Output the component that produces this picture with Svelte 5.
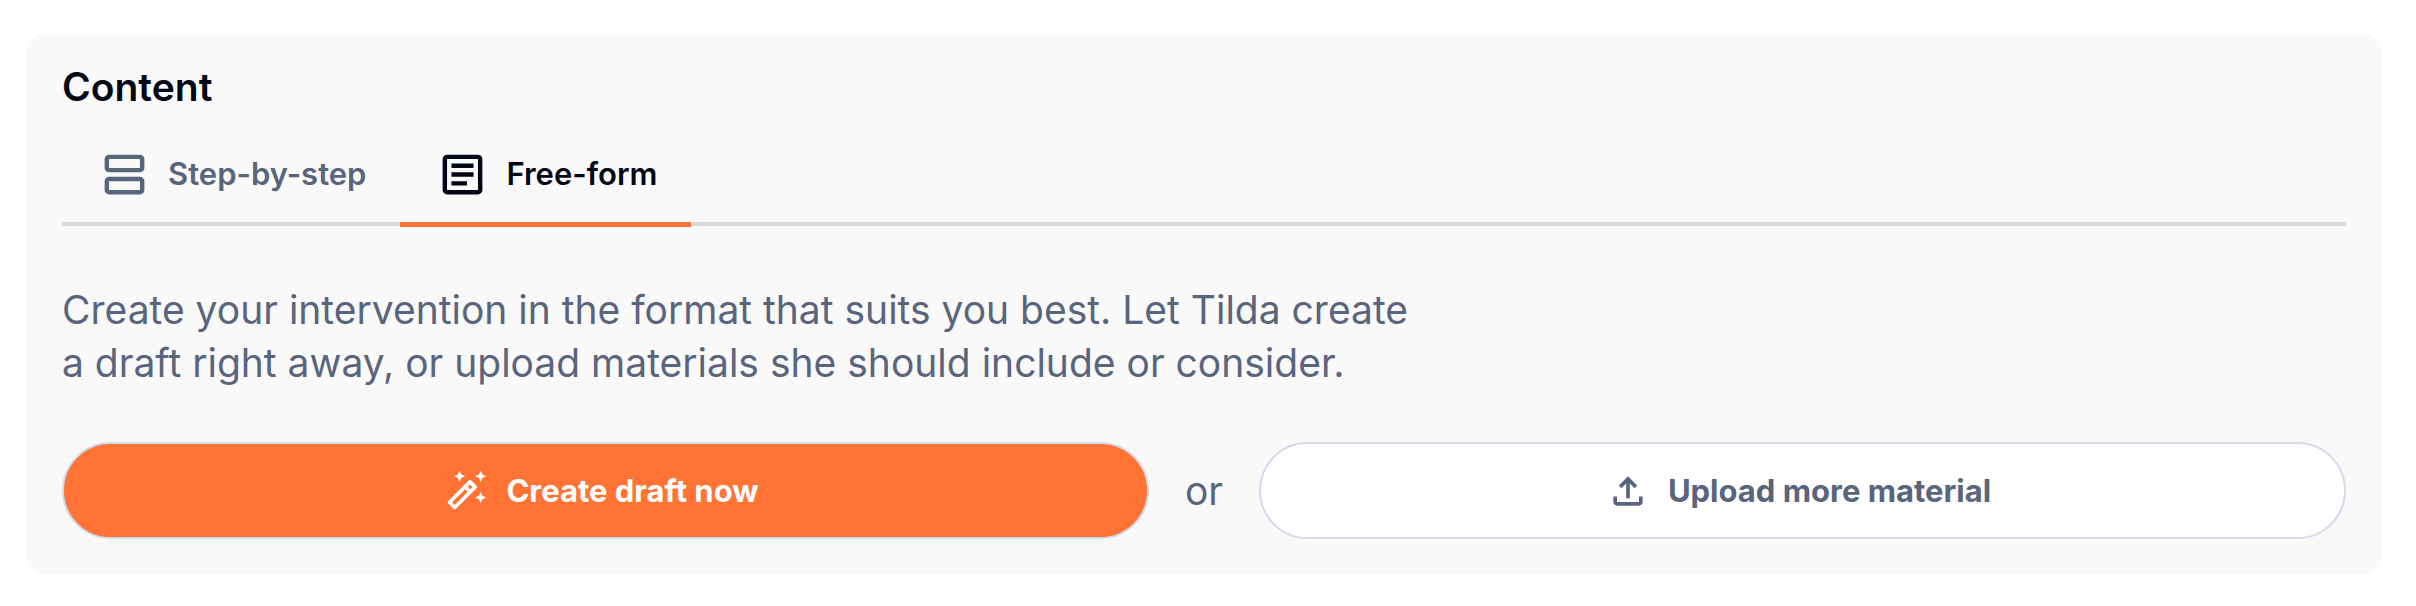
<script lang="ts">
	type Tab = { id: string; label: string };

	const tabs: Tab[] = [
		{ id: 'steps', label: 'Step-by-step' },
		{ id: 'free', label: 'Free-form' },
	];

	let active = $state('free');
</script>

<section class="card">
	<h2>Content</h2>

	<div class="tabs" role="tablist">
		{#each tabs as tab}
			<button
				class="tab"
				class:active={active === tab.id}
				role="tab"
				aria-selected={active === tab.id}
				onclick={() => (active = tab.id)}
			>
				<svg class="tab-icon" viewBox="0 0 24 24" aria-hidden="true">
					{#if tab.id === 'steps'}
						<rect x="4" y="4" width="16" height="6" rx="1" />
						<rect x="4" y="14" width="16" height="6" rx="1" />
					{:else}
						<rect x="4" y="4" width="16" height="16" rx="1" />
						<path d="M7 8h10M7 12h10M7 16h7" />
					{/if}
				</svg>
				<span class="tab-label">{tab.label}</span>
			</button>
		{/each}
	</div>

	<p>
		Create your intervention in the format that suits you best. Let Tilda create a draft right
		away, or upload materials she should include or consider.
	</p>

	<div class="actions">
		<button class="action primary">
			<svg viewBox="0 0 24 24" aria-hidden="true">
				<path
					d="M20 7l.94-2.06L23 4l-2.06-.94L20 1l-.94 2.06L17 4l2.06.94zM8.5 7l.94-2.06L11.5 4l-2.06-.94L8.5 1l-.94 2.06L5.5 4l2.06.94zM20 12.5l-.94 2.06-2.06.94 2.06.94.94 2.06.94-2.06L23 15.5l-2.06-.94zM17.71 9.12l-2.83-2.83c-.2-.19-.45-.29-.71-.29s-.51.1-.71.29L2.29 17.46c-.39.39-.39 1.02 0 1.41l2.83 2.83c.2.2.45.3.71.3s.51-.1.71-.29l11.17-11.17c.39-.39.39-1.03 0-1.42zM14.17 8.42l1.41 1.41L14.41 11 13 9.59zM5.83 19.59l-1.41-1.41L11.59 11 13 12.41z"
				/>
			</svg>
			Create draft now
		</button>
		<span class="or">or</span>
		<button class="action">
			<svg viewBox="0 0 24 24" aria-hidden="true">
				<path
					d="M11 16V7.85l-2.6 2.6L7 9l5-5 5 5-1.4 1.45-2.6-2.6V16zm-5 4q-.825 0-1.412-.587T4 18v-3h2v3h12v-3h2v3q0 .825-.587 1.413T18 20z"
				/>
			</svg>
			Upload more material
		</button>
	</div>
</section>

<style>
	:global(body) {
		background: #fff;
	}
	.card {
		margin: 33px 35px 32px 27px;
		padding: 27px 35px 35px;
		border-radius: 18px;
		background: #f9f9f9;
		color: #59647d;
		font-family: Inter, sans-serif;
	}
	h2 {
		margin: 0 0 35px;
		color: #040816;
		font-size: 39px;
		font-weight: 600;
		line-height: 53px;
	}
	.tabs {
		display: flex;
		height: 74px;
		border-bottom: 4px solid #d9d9d9;
	}
	.tab {
		display: flex;
		align-items: center;
		gap: 17px;
		height: 79px;
		box-sizing: border-box;
		padding: 0 34px 21px 36px;
		border: 0;
		border-bottom: 5px solid transparent;
		background: none;
		color: inherit;
		font: 600 31px/50px Inter, sans-serif;
		cursor: pointer;
	}
	.tab.active {
		border-bottom-color: #ff7435;
		color: #040816;
	}
	.tab-icon {
		width: 53px;
		height: 53px;
		fill: none;
		stroke: currentColor;
		stroke-width: 2;
	}
	.tab-label {
		padding-bottom: 2px;
	}
	p {
		max-width: 1350px;
		margin: 57px 0 53px;
		font-size: 39px;
		line-height: 53px;
	}
	.actions {
		display: flex;
		align-items: center;
		gap: 36px;
	}
	.action {
		display: flex;
		flex: 1;
		align-items: center;
		justify-content: center;
		gap: 18px;
		padding: 20px 40px 20px 32px;
		border: 2px solid #d3daec;
		border-radius: 49px;
		background: #fff;
		color: inherit;
		font: 700 31px/53px Inter, sans-serif;
		cursor: pointer;
	}
	.action.primary {
		background: #ff7435;
		color: #fff;
	}
	.action svg {
		width: 44px;
		height: 44px;
		fill: currentColor;
	}
	.or {
		font-size: 39px;
		line-height: 53px;
	}
</style>
